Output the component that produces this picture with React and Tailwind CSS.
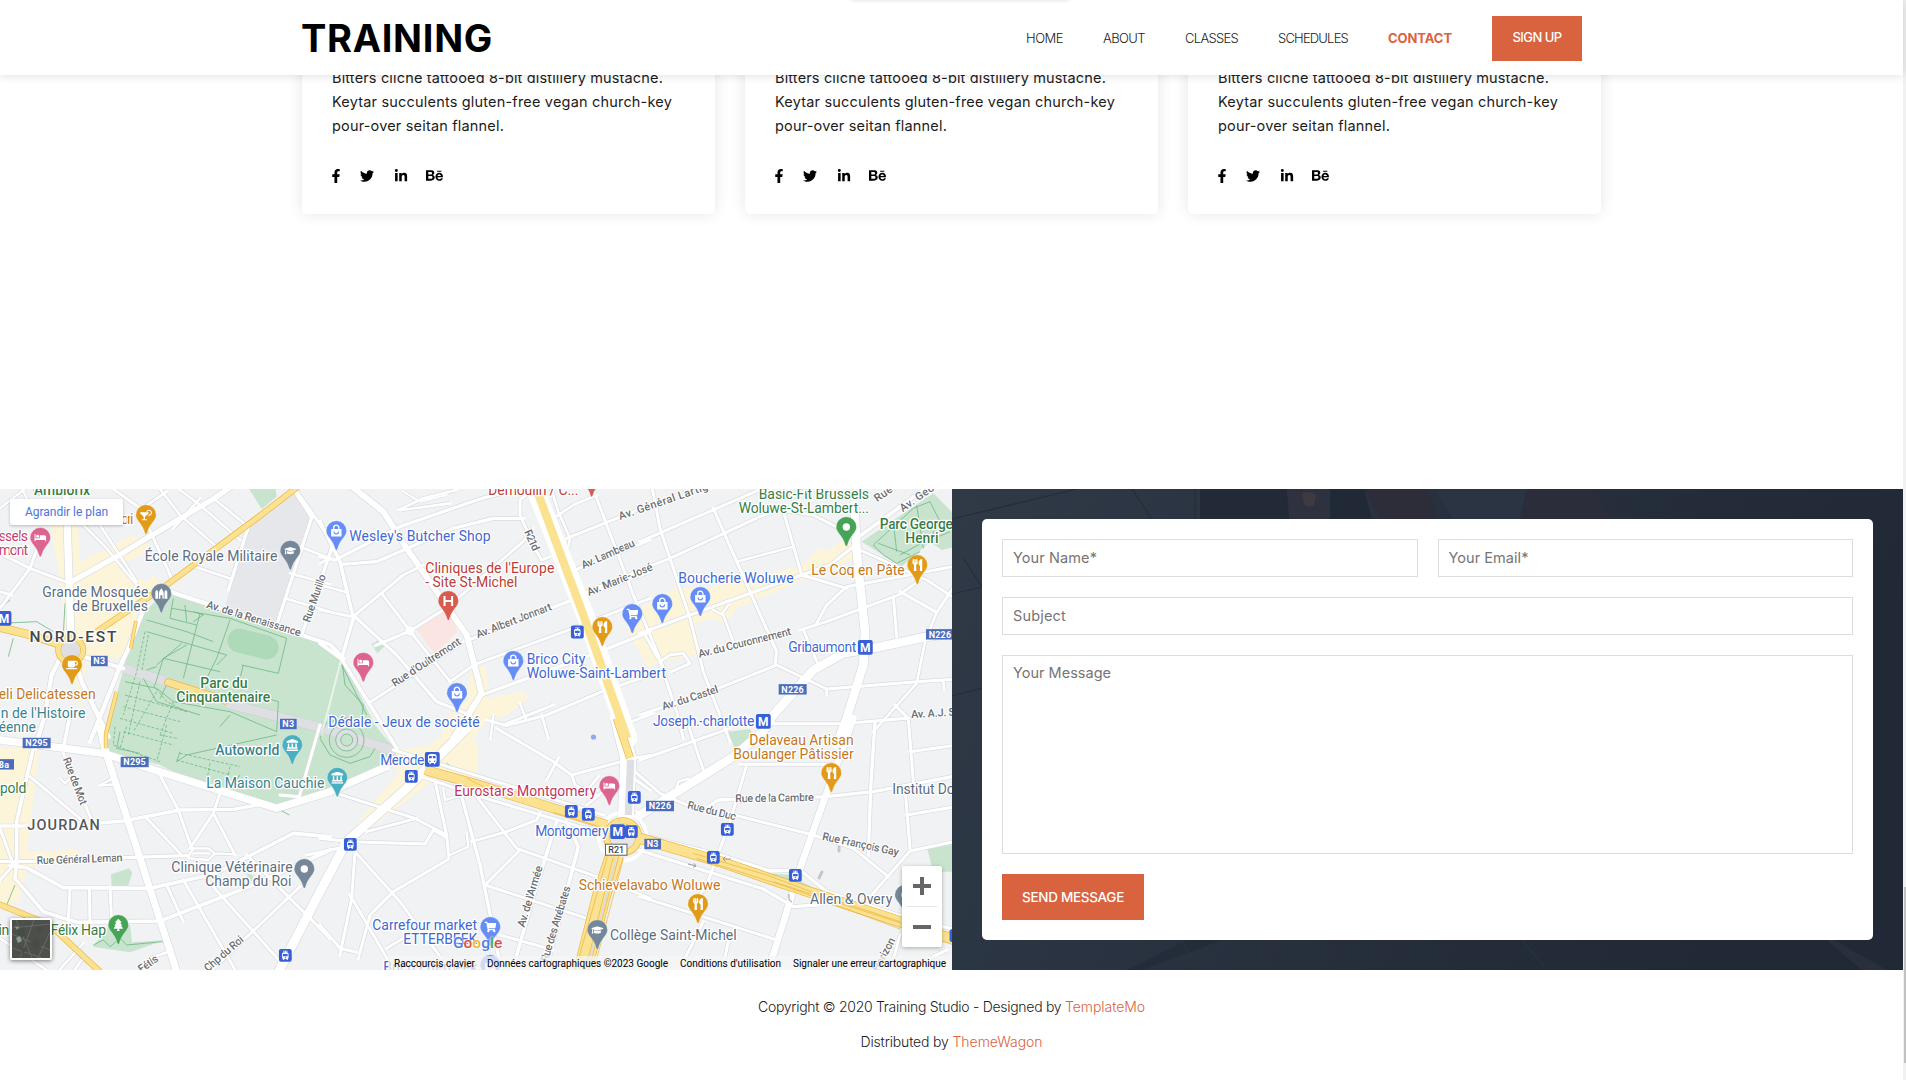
import React, { useLayoutEffect, useRef, useState } from "react";
import {
  FaFacebookF, FaTwitter, FaLinkedinIn, FaBehance, FaBed, FaGraduationCap, FaShoppingCart,
  FaUtensils, FaCoffee, FaCocktail, FaTree, FaLandmark, FaShoppingBag, FaMosque,
} from "react-icons/fa";
import { MdTram, MdTrain } from "react-icons/md";

/* Text set to an exact run width by spreading the difference over its letters. */
function Fit({ w, className = "", children }) {
  const ref = useRef(null);
  const [ls, setLs] = useState(0);
  useLayoutEffect(() => {
    const natural = ref.current.getBoundingClientRect().width;
    setLs((w - natural) / children.length);
  }, []);
  return (
    <span ref={ref} className={"inline-block whitespace-pre " + className} style={{ letterSpacing: ls + "px" }}>
      {children}
    </span>
  );
}

/* Map sheets: every sheet is drawn at three times its size from its own origin. */
const SHEETS = {
  A: [0, 485], B: [320, 485], C: [640, 485],
  D: [0, 725], E: [320, 725], F: [640, 725],
};
const at = (s, x, y) => [SHEETS[s][0] + x / 3, SHEETS[s][1] + y / 3];
const sheet = (s) => `translate(${SHEETS[s][0]} ${SHEETS[s][1]}) scale(0.33333)`;

const GREEN = "#c8e4ce";
const SAND = "#fdf5da";

const AREAS = [
  ["A", GREEN, "M92,0 L106,32 L265,32 L272,0Z"],
  ["A", GREEN, "M740,0 L825,0 L830,35 L785,72Z"],
  ["A", SAND, "M150,110 L235,110 L238,232 L400,150 L455,190 L350,250 L440,290 L460,270 L490,300 L400,362 L420,400 L385,520 L262,512 L240,690 L225,560 L185,530 L195,440 L182,300Z"],
  ["A", "#e6e7eb", "M750,125 L880,20 L935,100 L830,425 L672,372Z"],
  ["A", GREEN, "M495,320 L960,475 L1025,520 L1125,720 L1190,800 L1160,840 L960,932 L830,968 L630,915 L480,840 L322,800 L325,740 L360,590 L415,400Z"],
  ["B", "#fae5e2", "M290,432 L385,375 L412,440 L345,508 L328,485Z"],
  ["B", GREEN, "M155,478 L185,460 L195,482 L172,505Z"],
  ["B", SAND, "M360,770 L385,690 L440,650 L450,560 L492,540 L505,590 L500,640 L610,620 L625,640 L560,690 L500,705 L455,770Z"],
  ["B", SAND, "M920,430 L990,400 L990,560Z"],
  ["C", SAND, "M0,370 L110,310 L200,310 L490,240 L540,185 L560,200 L610,165 L670,190 L660,215 L600,240 L500,280 L290,370 L255,415 L220,400 L165,415 L185,505 L30,540 L0,440Z"],
  ["C", GREEN, "M665,170 L880,25 L945,90 L945,185 L905,195 L870,170 L785,245Z"],
  ["D", SAND, "M0,70 L120,60 L90,300 L80,380 L235,374 L235,402 L80,430 L55,530 L0,540Z"],
  ["D", GREEN, "M333,448 L388,430 L397,445 L384,482 L335,485Z"],
  ["D", GREEN, "M330,600 L390,600 L396,652 L495,645 L390,682 L278,665Z"],
  ["D", GREEN, "M738,445 L760,450 L756,470Z"],
  ["E", SAND, "M200,110 L240,75 L330,60 L380,20 L470,50 L475,150 L430,180 L360,150 L150,310 L90,320 L240,140Z"],
  ["F", GREEN, "M860,365 L945,350 L945,440 L880,440Z"],
  ["F", GREEN, "M390,445 L450,450 L525,492 L430,480Z"],
  ["F", GREEN, "M265,20 L330,12 L345,40 L285,75Z"],
  ["F", SAND, "M-20,320 L0,300 L15,340 L0,370Z"],
];

const ROADS = [
  ["A", 22, "M198,0 L207,290 L213,460"],
  ["A", 16, "M215,290 L350,215 L440,160 L640,42 L700,0"],
  ["A", 12, "M495,315 L990,478 L1030,520"],
  ["A", 13, "M432,370 L385,490 L360,545 L270,770"],
  ["A", 14, "M225,520 L245,590 L325,755"],
  ["A", 12, "M250,515 L370,550"],
  ["A", 13, "M180,520 L155,570 L135,690 L105,790"],
  ["A", 9, "M340,12 L420,70 L515,280"],
  ["A", 8, "M250,120 L320,190 L410,300"],
  ["A", 8, "M300,120 L410,290"],
  ["A", 8, "M480,12 L540,90 L655,190"],
  ["A", 8, "M540,15 L600,60 L720,165"],
  ["A", 8, "M640,40 L745,125"],
  ["A", 8, "M520,130 L600,40 M420,75 L500,20"],
  ["A", 9, "M0,205 L90,250 L210,295"],
  ["A", 9, "M0,370 L90,250 L130,140 M0,320 L35,330"],
  ["A", 7, "M60,0 L90,60 M0,70 L90,0"],
  ["A", 10, "M745,125 L685,315"],
  ["A", 8, "M585,245 L695,282"],
  ["A", 10, "M885,20 L935,98 L830,420"],
  ["A", 10, "M890,20 L990,160"],
  ["A", 8, "M885,180 L990,220 M870,265 L990,298 M855,340 L990,380"],
  ["A", 10, "M995,190 L905,450"],
  ["B", 18, "M90,0 L190,80 L260,190 L350,320 L440,450 L485,625 L400,760"],
  ["B", 11, "M0,110 L60,230 L100,400 L65,520"],
  ["B", 10, "M0,215 L45,225 L240,125 L480,42 L620,5"],
  ["B", 10, "M65,238 L170,230 L400,130 L520,100 L612,100"],
  ["B", 8, "M235,75 L310,40 L410,15 M245,75 L390,55"],
  ["B", 6, "M250,20 L300,50 L380,30"],
  ["B", 9, "M105,390 L250,270 L310,240"],
  ["B", 10, "M105,395 L230,510 L350,650 L450,690"],
  ["B", 9, "M185,325 L270,438 L390,590"],
  ["B", 9, "M165,482 L270,438 L385,365 L620,160 L640,130"],
  ["B", 8, "M0,375 L95,395 M0,300 L75,320 M0,235 L20,225"],
  ["B", 10, "M445,465 L730,355 L990,260"],
  ["B", 9, "M145,655 L430,470"],
  ["B", 9, "M390,590 L465,538 L760,430 L990,340"],
  ["B", 10, "M485,630 L840,500 L990,440"],
  ["B", 9, "M740,265 L990,165"],
  ["B", 9, "M750,340 L990,245"],
  ["B", 9, "M740,160 L890,100 L990,60"],
  ["B", 8, "M690,0 L715,80 L750,160 L745,185 L725,200"],
  ["B", 9, "M630,20 L600,45 L600,90 L650,200 L665,225 L690,215"],
  ["B", 9, "M815,0 L940,330 L990,450 L1035,560"],
  ["B", 8, "M700,100 L760,60 L830,30"],
  ["B", 9, "M500,705 L560,722 L680,690 L840,622 L990,570"],
  ["B", 8, "M600,655 L617,700 M665,690 L685,760 M520,690 L512,760"],
  ["B", 9, "M920,715 L1000,685"],
  ["B", 11, "M0,475 L65,522 L150,660 L230,790"],
  ["C", 9, "M35,0 L60,130 L150,400 L190,560 L270,770"],
  ["C", 9, "M220,70 L330,320 L410,500 L405,540"],
  ["C", 9, "M0,170 L230,70 L380,5"],
  ["C", 9, "M0,255 L90,220 L360,95 L420,75 L520,90 L645,155"],
  ["C", 9, "M425,60 L485,270 L620,310"],
  ["C", 8, "M290,230 L460,185"],
  ["C", 10, "M0,445 L150,390 L330,325 L570,240 L640,185"],
  ["C", 9, "M530,415 L560,360 L620,305 L700,290 L990,235"],
  ["C", 9, "M480,435 L560,410 L780,328 L840,285"],
  ["C", 9, "M490,435 L535,540"],
  ["C", 9, "M780,320 L890,382 L945,300"],
  ["C", 8, "M890,382 L855,470 L830,595 L700,740"],
  ["C", 11, "M650,160 L870,0"],
  ["C", 9, "M660,195 L760,240 L860,285 L960,350"],
  ["C", 9, "M0,690 L240,608 L410,540 L560,612 L830,590 L990,580"],
  ["C", 9, "M760,335 L770,455"],
  ["C", 8, "M560,612 L560,630 M910,590 L912,612"],
  ["C", 9, "M390,716 L610,716 L800,700 M765,660 L805,700"],
  ["C", 9, "M10,440 L60,530 L110,680 L130,760"],
  ["C", 9, "M60,530 L90,510 L130,505 L150,535 L95,560"],
  ["C", 8, "M220,375 L245,388 L265,360 M250,390 L280,470"],
  ["C", 26, "M643,60 L650,200 L675,440 L670,540 L620,700 L590,780"],
  ["C", 26, "M990,438 L860,455 L700,490 L610,505 L520,555 L400,690 L370,740 L280,815 L0,990"],
  ["D", 22, "M0,45 L310,85 L480,140 L830,250 L990,200 L1160,125"],
  ["D", 21, "M300,10 L320,90 L540,770"],
  ["D", 11, "M100,70 L50,290 L50,410 L45,460 L130,560 L230,592 L480,588 L760,480 L990,375"],
  ["D", 10, "M0,303 L80,303 M300,294 L370,288 L540,255 L700,253 L800,235"],
  ["D", 9, "M90,155 L245,285 M190,85 L275,285"],
  ["D", 10, "M0,410 L110,410 M370,398 L560,392"],
  ["D", 11, "M30,422 L80,428 L190,488 L450,490 L640,448 L880,325 L990,335"],
  ["D", 9, "M0,310 L40,420 L0,465"],
  ["D", 9, "M480,150 L535,255 L575,370"],
  ["D", 9, "M660,205 L640,265 L705,390 M640,265 L570,370 M440,280 L545,390"],
  ["D", 7, "M565,395 L580,370 L625,370 L645,385 L625,405 L570,400 M645,385 L705,388 M580,385 L625,385"],
  ["D", 9, "M210,490 L205,592 M268,490 L270,590 M330,485 L335,590"],
  ["D", 9, "M500,480 L550,590 M550,465 L720,760 M610,452 L850,720"],
  ["D", 9, "M740,390 L830,480 L990,640"],
  ["D", 9, "M900,485 L620,750"],
  ["D", 11, "M190,70 L208,-20"],
  ["D", 8, "M0,640 L140,735 M160,755 L250,655 M200,770 L255,690 M450,700 L505,680"],
  ["D", 7, "M180,160 L195,175 L210,160 M300,180 L330,165 M300,182 L340,178"],
  ["D", 9, "M895,225 L960,0 M840,210 L895,215"],
  ["E", 27, "M-150,790 L0,500 L80,350 L260,190 L440,10"],
  ["E", 9, "M530,10 L700,110 L755,150 L940,100 L1000,90"],
  ["E", 9, "M550,0 L700,-60"],
  ["E", 9, "M715,100 L680,165 M755,150 L765,180 L830,210"],
  ["E", 9, "M50,205 L285,280 L380,330 L387,402 L220,500 L150,570 L115,700"],
  ["E", 9, "M0,340 L90,350 L315,357 L340,315 L375,335 M90,362 L-40,390 M140,320 L290,280"],
  ["E", 9, "M345,165 L355,215 L380,330"],
  ["E", 10, "M425,215 L480,420 L545,740"],
  ["E", 9, "M470,215 L590,370 L830,455 L990,520"],
  ["E", 9, "M455,350 L560,320 L650,285 L660,265"],
  ["E", 9, "M600,375 L495,480 L800,580"],
  ["E", 11, "M710,290 L650,480 L570,760"],
  ["E", 11, "M740,290 L775,365 L740,500 L670,760"],
  ["E", 9, "M105,380 L240,530 L400,750 M105,380 L95,520 L60,690 M90,510 L230,750"],
  ["E", 9, "M0,600 L60,670 L110,682 M200,670 L250,640 M540,630 L700,675"],
  ["E", 7, "M370,190 L375,225 L430,210 M390,390 L445,365 L440,325"],
  ["E", 9, "M220,75 L400,130 L740,235 L850,270 M290,150 L480,215 L780,305 L860,320"],
  ["E", 48, "M895,-20 L925,100 L918,275"],
  ["E", 9, "M790,210 L835,155 M800,240 L880,175 L940,160 L990,195"],
  ["F", 9, "M145,0 L195,150"],
  ["F", 9, "M0,105 L270,10"],
  ["F", 9, "M-15,140 L60,205 L140,240"],
  ["F", 7, "M105,205 L115,170 L145,160 L160,180"],
  ["F", 9, "M300,118 L580,118 M320,120 L270,290 L200,480 L180,510"],
  ["F", 20, "M640,-20 L540,260 L480,430 L440,560 L390,720"],
  ["F", 10, "M205,245 L235,225 L560,215 L700,200 L990,145"],
  ["F", 9, "M290,272 L520,330 L640,370 L745,455"],
  ["F", 10, "M705,-10 L692,190 L685,390"],
  ["F", 9, "M805,-20 L820,170 M795,190 L810,370"],
  ["F", 9, "M810,80 L990,55 M800,270 L990,238 M690,515 L810,378 L990,340"],
  ["F", 10, "M-10,260 L25,335 L240,390 L390,438 L480,435 L560,500 L780,572 L990,625"],
  ["F", 10, "M-20,370 L370,492 L460,545 L530,540"],
  ["F", 9, "M0,515 L400,642 M190,590 L130,710 L330,725 M265,650 L250,720"],
  ["F", 9, "M780,630 L750,740"],
  ["F", 10, "M870,700 L920,675"],
];

const HIGHWAYS = [
  ["A", 15, "M900,0 L790,85 L500,300 L290,440"],
  ["A", 22, "M-10,425 L85,448 L180,478"],
  ["A", 20, "M505,592 L675,646"],
  ["A", 7, "M408,408 L392,490"],
  ["A", 9, "M350,620 L318,745 L318,790"],
  ["D", 15, "M-10,535 L150,600 L310,750"],
  ["E", 20, "M890,-20 L930,98"],
  ["E", 26, "M315,135 L470,178 L860,300"],
  ["E", 52, "M884,390 L845,510 L782,760"],
  ["F", 29, "M0,340 L240,410 L390,462 L520,505 L780,590 L990,660"],
];
const HIGHWAY_LINES = [
  ["E", "M862,395 L765,740 M880,395 L795,740 M896,395 L805,740 M910,400 L820,740"],
  ["F", "M160,385 L380,450 L540,510 L780,590 M170,400 L440,485 L780,612 M400,470 L800,600"],
  ["E", "M440,160 L500,190 M700,262 L860,312"],
];

const PARK_PATHS = [
  ["A", "M520,340 L510,400 L590,420 M515,370 L690,400 L860,460 M440,405 L560,440 L640,470 M600,385 L550,580 M690,405 L650,520 L620,580 M440,440 L680,510 L650,540 M860,460 L835,565 L725,540 M555,360 L560,410 M580,380 L610,390 L580,410 M545,475 L470,540 M560,480 L490,520 L465,600 M490,520 L660,560 M470,545 L440,555 M730,540 L715,600"],
  ["A", "M375,590 L470,610 L520,650 L690,680 L830,740 M430,580 L470,650 L600,690 M800,640 L835,650 L830,740 M690,690 L660,725 M500,600 L480,640"],
  ["A", "M0,415 L110,410 L160,440 M190,450 L195,355 M40,460 L25,515 M0,370 L30,345"],
  ["D", "M360,20 L350,70 L420,85 M540,80 L530,110 L560,90 L830,30 M690,190 L720,150 M840,255 L868,270 M640,180 L815,235 M20,540 L45,480 M280,660 L310,645 L330,665 L360,640 L380,660 L490,650"],
  ["B", "M65,520 L75,600 L130,660 L125,700 M65,540 L140,690"],
  ["C", "M700,180 L730,210 L770,235 L840,200 M700,180 L820,70 L870,50 L900,110 L870,160 L780,210 M715,175 L810,210 M760,110 L770,200 M830,60 L850,190 M860,170 L930,140"],
  ["E", "M380,115 L405,132"],
];
const PARK_DASHES = [
  ["A", "M435,440 L410,560 L370,690 M445,450 L425,560 M375,630 L560,680 M370,665 L540,710 M360,700 L520,745 M420,590 L385,750 M470,620 L400,740 M520,650 L480,750 M460,600 L500,650 L560,680"],
  ["D", "M345,5 L340,60 L480,110 M380,5 L360,70 M370,20 L520,60 M500,0 L470,110 M540,85 L720,125 M530,105 L690,150 M630,115 L620,170 M690,125 L680,175 M480,30 L530,40"],
];

const SLATE = "#76879a";
const BLUE = "#668cf5";
const ORANGE = "#e19b18";
const PINK = "#dd6490";
const TEAL = "#4bafc2";
const LEAF = "#47a355";
const PINS = [
  ["A", 438, 90, ORANGE, FaCocktail], ["A", 121, 158, PINK, FaBed], ["A", 871, 197, SLATE, FaGraduationCap],
  ["A", 484, 326, SLATE, FaMosque], ["A", 216, 540, ORANGE, FaCoffee], ["B", 49, 138, BLUE, FaShoppingBag],
  ["B", 385, 348, "#d85b4f", "H"], ["B", 130, 533, PINK, FaBed], ["B", 411, 624, BLUE, FaShoppingBag],
  ["B", 580, 528, BLUE, FaShoppingBag], ["B", 847, 426, ORANGE, FaUtensils], ["B", 937, 387, BLUE, FaShoppingCart],
  ["B", 815, -22, "#d85b4f", "dot"], ["C", 67, 357, BLUE, FaShoppingBag], ["C", 181, 336, BLUE, FaShoppingBag],
  ["C", 619, 126, LEAF, "dot"], ["C", 832, 240, ORANGE, FaUtensils], ["D", 877, 60, TEAL, FaLandmark],
  ["E", 52, 158, TEAL, FaLandmark], ["E", 868, 183, PINK, FaBed], ["E", 832, 615, SLATE, FaGraduationCap],
  ["E", 511, 606, BLUE, FaShoppingCart], ["E", 511, 720, BLUE, FaShoppingBag], ["F", 574, 144, ORANGE, FaUtensils],
  ["F", 174, 537, ORANGE, FaUtensils], ["D", 913, 432, SLATE, "dot"], ["D", 355, 600, LEAF, FaTree],
  ["F", 795, 510, SLATE, "dot"],
];

const TRAMS = [
  ["B", 772, 441], ["E", 274, 154], ["E", 91, 358], ["E", 754, 259], ["E", 805, 268], ["E", 943, 217],
  ["E", 934, 320], ["F", 262, 313], ["F", 220, 397], ["F", 466, 451], ["D", 856, 691], ["F", 948, 632],
];
const METROS = [["A", 12, 400], ["C", 676, 487], ["C", 370, 709], ["E", 893, 320]];
const SHIELDS = [
  ["A", 298, 528, 50, "N3"], ["A", 865, 717, 50, "N3"], ["D", 110, 54, 84, "N295"], ["D", 404, 111, 84, "N295"],
  ["D", 12, 118, 60, "8a"], ["C", 458, 613, 84, "N226"], ["C", 900, 448, 84, "N226"], ["F", 60, 243, 84, "N226"],
  ["F", 38, 357, 50, "N3"],
];

const T_SLATE = "#5d6d80";
const T_BLUE = "#4267d2";
const T_ORANGE = "#c47721";
const T_GREEN = "#377d44";
const T_RED = "#bb4036";
const T_TEAL = "#37848f";
/* sheet, x, baseline, width, text, colour */
const LABELS = [
  ["A", 102, 31, 168, "Ambiorix", T_GREEN, 500],
  ["A", 362, 117, 38, "ori", T_ORANGE],
  ["A", -4, 168, 88, "ssels", "#c2406d"],
  ["A", -4, 209, 88, "mont", "#c2406d"],
  ["A", 434, 228, 398, "École Royale Militaire", T_SLATE],
  ["A", 127, 337, 318, "Grande Mosquée", T_SLATE],
  ["A", 217, 378, 227, "de Bruxelles", T_SLATE],
  ["A", -4, 642, 291, "eli Delicatessen", T_ORANGE],
  ["A", 2, 698, 254, "n de l'Histoire", T_TEAL],
  ["A", -4, 740, 112, "éenne", T_TEAL],
  ["A", 601, 609, 142, "Parc du", T_GREEN, 500],
  ["A", 529, 650, 282, "Cinquantenaire", T_GREEN, 500],
  ["B", 88, 168, 424, "Wesley's Butcher Shop", T_BLUE],
  ["B", 505, 31, 270, "Demoulin / C...", T_RED],
  ["B", 316, 264, 387, "Cliniques de l'Europe", T_RED],
  ["B", 316, 305, 276, "- Site St-Michel", T_RED],
  ["B", 620, 537, 176, "Brico City", T_BLUE],
  ["B", 620, 579, 418, "Woluwe-Saint-Lambert", T_BLUE],
  ["B", 25, 725, 454, "Dédale - Jeux de société", T_BLUE],
  ["C", 356, 41, 331, "Basic-Fit Brussels", T_GREEN],
  ["C", 296, 84, 391, "Woluwe-St-Lambert...", T_GREEN],
  ["C", 115, 293, 346, "Boucherie Woluwe", T_BLUE],
  ["C", 514, 270, 280, "Le Coq en Pâte", T_ORANGE],
  ["C", 719, 132, 220, "Parc George", T_GREEN, 500],
  ["C", 796, 174, 100, "Henri", T_GREEN, 500],
  ["C", 445, 500, 204, "Gribaumont", T_BLUE],
  ["C", 39, 723, 304, "Joseph.-charlotte", T_BLUE],
  ["D", 646, 90, 192, "Autoworld", T_TEAL, 500],
  ["D", 619, 189, 354, "La Maison Cauchie", T_TEAL],
  ["D", 0, 204, 79, "pold", T_GREEN],
  ["D", 514, 440, 364, "Clinique Vétérinaire", T_SLATE],
  ["D", 616, 482, 258, "Champ du Roi", T_SLATE],
  ["D", -4, 629, 32, "in", T_GREEN],
  ["D", 152, 629, 166, "Félix Hap", T_GREEN],
  ["E", 181, 120, 132, "Merode", T_BLUE],
  ["E", 403, 213, 426, "Eurostars Montgomery", "#c2335f"],
  ["E", 646, 333, 220, "Montgomery", T_BLUE],
  ["E", 776, 495, 425, "Schievelavabo Woluwe", T_ORANGE],
  ["E", 157, 615, 314, "Carrefour market", T_BLUE],
  ["E", 250, 657, 222, "ETTERBEEK", T_BLUE],
  ["E", 870, 644, 380, "Collège Saint-Michel", T_SLATE],
  ["E", 190, 742, 282, "Brico Etterbeek", T_BLUE],
  ["F", 328, 59, 313, "Delaveau Artisan", T_ORANGE],
  ["F", 280, 102, 361, "Boulanger Pâtissier", T_ORANGE],
  ["F", 757, 207, 210, "Institut Don", T_SLATE],
  ["F", 510, 537, 247, "Allen & Overy", T_SLATE],
];
/* sheet, x, baseline, width, angle, text */
const STREETS = [
  ["A", 617, 368, 295, 17, "Av. de la Renaissance"],
  ["A", 929, 414, 150, -71, "Rue Murillo"],
  ["B", 612, 140, 66, 66, "R21d"],
  ["B", 900, 105, 320, -19, "Av. Général Lartigue"],
  ["B", 790, 252, 172, -24, "Av. Lambeau"],
  ["B", 806, 333, 210, -22, "Av. Marie-José"],
  ["B", 473, 460, 240, -21, "Av. Albert Jonnart"],
  ["B", 224, 606, 240, -33, "Rue d'Oultremont"],
  ["C", 712, 52, 100, -35, "Rue St"],
  ["C", 788, 82, 170, -35, "Av. George"],
  ["C", 178, 518, 285, -14, "Av. du Couronnement"],
  ["C", 70, 676, 175, -18, "Av. du Castel"],
  ["C", 814, 699, 140, -3, "Av. A.J. Sl"],
  ["D", 188, 102, 150, 69, "Rue de Mot"],
  ["D", 110, 418, 258, -2, "Rue Général Leman"],
  ["D", 424, 744, 65, -35, "Fétis"],
  ["D", 624, 742, 145, -41, "Chp du Roi"],
  ["E", 613, 608, 190, -73, "Av. de l'Armée"],
  ["E", 683, 712, 235, -73, "Rue des Atrébates"],
  ["F", 286, 232, 236, -1, "Rue de la Cambre"],
  ["F", 140, 250, 150, 14, "Rue du Duc"],
  ["F", 545, 344, 234, 12, "Rue François Gay"],
  ["F", 715, 742, 110, -62, "Horizon"],
];

function Pin({ s, x, y, color, icon: Icon }) {
  const [cx, cy] = at(s, x, y);
  return (
    <g transform={`translate(${cx} ${cy})`}>
      <path d="M0,-10.2 A10.2,10.2 0 0 1 10.2,0 C10.2,5.6 3.4,8.6 1.1,18.2 Q0,20.4 -1.1,18.2 C-3.4,8.6 -10.2,5.6 -10.2,0 A10.2,10.2 0 0 1 0,-10.2Z" fill={color} stroke="#fff" strokeOpacity=".55" strokeWidth=".6" />
      {Icon === "dot" && <circle r="3.7" fill="#fff" />}
      {Icon === "H" && <path d="M-3.8,-5 V5 M3.8,-5 V5 M-3.8,0 H3.8" stroke="#fff" strokeWidth="2" fill="none" />}
      {Icon === FaShoppingBag && (
        <g>
          <path d="M-5.2,-2 H5.2 V5 Q5.2,5.6 4.6,5.6 H-4.6 Q-5.2,5.6 -5.2,5Z" fill="#fff" />
          <path d="M-2.6,-1.5 V-3.2 A2.6,2.6 0 0 1 2.6,-3.2 V-1.5" fill="none" stroke="#fff" strokeWidth="1.3" />
          <path d="M-2.3,.6 A2.3,2.3 0 0 0 2.3,.6" fill="none" stroke={color} strokeWidth="1.1" />
        </g>
      )}
      {Icon === FaMosque && (
        <path d="M-6,5 V-2 L-4.6,-4 L-3.2,-2 V5Z M3.2,5 V-2 L4.6,-4 L6,-2 V5Z M-2.4,5 V-.5 Q-2.4,-2.5 0,-5.4 Q2.4,-2.5 2.4,-.5 V5 H1 V1.5 H-1 V5Z" fill="#fff" />
      )}
      {typeof Icon !== "string" && Icon !== FaShoppingBag && Icon !== FaMosque && <Icon x="-6" y="-6" size={12} color="#fff" />}
    </g>
  );
}

function CityMap() {
  return (
    <svg viewBox="0 489 952 481" className="block h-[481px] w-[952px]" fontFamily='Roboto, "Liberation Sans", sans-serif'>
      <rect x="0" y="489" width="952" height="481" fill="#f0f2f4" />
      {AREAS.map(([s, c, d], i) => <path key={i} transform={sheet(s)} d={d} fill={c} />)}
      <g transform={sheet("A")}>
        <rect x="-78" y="-36" width="156" height="72" rx="36" fill="#afdab9" transform="translate(759 477) rotate(14)" />
        <path d="M370,550 L500,590 M680,655 L950,725 L1190,800" stroke="#cfd1d4" strokeWidth="31" fill="none" />
        <path d="M370,550 L500,590 M680,655 L950,725 L1190,800" stroke="#dedfe2" strokeWidth="27" fill="none" />
      </g>
      <g fill="none" stroke="#6fb682" strokeWidth="2.4">
        {PARK_PATHS.map(([s, d], i) => <path key={i} transform={sheet(s)} d={d} />)}
        <g strokeDasharray="9 5">{PARK_DASHES.map(([s, d], i) => <path key={i} transform={sheet(s)} d={d} />)}</g>
        <g transform={sheet("E")}>
          <circle cx="80" cy="45" r="33" fill="#dedfe2" />
          <circle cx="80" cy="45" r="18" fill={GREEN} />
          <circle cx="80" cy="45" r="52" />
          <path d="M20,-10 L0,40 L30,90 L90,115 L150,95 L165,70 M30,-10 L90,-22 L150,5" />
        </g>
      </g>
      <g fill="none" stroke="#d9dbe0" strokeLinejoin="round">
        {ROADS.map(([s, w, d], i) => <path key={i} transform={sheet(s)} d={d} strokeWidth={w + 4} />)}
        <circle cx="410" cy="631" r="3.5" strokeWidth="3.4" />
      </g>
      <g fill="none" stroke="#fff" strokeLinejoin="round" strokeLinecap="round">
        {ROADS.map(([s, w, d], i) => <path key={i} transform={sheet(s)} d={d} strokeWidth={w} />)}
        <path transform={sheet("B")} d="M640,0 L700,150 L800,400 L925,760" strokeWidth="54" />
        <path transform={sheet("B")} d="M5,750 L62,530" strokeWidth="6" strokeOpacity=".6" />
        <circle cx="410" cy="631" r="3.5" strokeWidth="2.4" />
        <circle cx="622.7" cy="836.7" r="24" strokeWidth="3.5" />
      </g>
      <path transform={sheet("E")} d="M932,104 L925,270" stroke="#dedfe2" strokeWidth="22" />
      <g fill="none" stroke="#efb43c">
        {HIGHWAYS.map(([s, w, d], i) => <path key={i} transform={sheet(s)} d={d} strokeWidth={w + 4} strokeLinecap={i === 2 ? "round" : "butt"} />)}
        <circle cx="70.7" cy="650" r="12.5" strokeWidth="6" />
        <circle cx="622.7" cy="836.7" r="16" strokeWidth="7" />
      </g>
      <g fill="none" stroke="#fae290">
        {HIGHWAYS.map(([s, w, d], i) => <path key={i} transform={sheet(s)} d={d} strokeWidth={w} strokeLinecap={i === 2 ? "round" : "butt"} />)}
        <path transform={sheet("B")} d="M645,0 L700,150 L790,390 L922,760" strokeWidth="25" />
        <circle cx="70.7" cy="650" r="12.5" strokeWidth="4.6" />
        <circle cx="622.7" cy="836.7" r="16" strokeWidth="5.4" />
      </g>
      <circle cx="70.7" cy="650" r="9.5" fill="#dedfe2" />
      <circle cx="622.7" cy="836.7" r="12.5" fill="#e6e6e6" />
      <g fill="none" stroke="#ebb545" strokeWidth="2.2">
        {HIGHWAY_LINES.map(([s, d], i) => <path key={i} transform={sheet(s)} d={d} />)}
      </g>
      <path transform={sheet("E")} d="M888,400 L800,740" stroke="#dcdcd8" strokeWidth="6" />
      <g fill="none" stroke="#9a9da2" strokeWidth="1">
        <path d="M723,859 h8 m-8,0 l2.5,-2.5 m-2.5,2.5 l2.5,2.5 M688,864 l8,2 m0,0 l-2,-2.7 m2,2.7 l-3,1.5 M789,894 v6 l3,2" />
        <path d="M819,878 l3,-6 M839,847 v4" stroke="#c5c7cb" strokeWidth="3" strokeLinecap="round" />
      </g>
      <circle cx="593.5" cy="737" r="2.6" fill="#93a9ee" />
      {SHIELDS.map(([s, x, y, w, t], i) => {
        const [cx, cy] = at(s, x, y);
        return (
          <g key={i}>
            <rect x={cx - w / 6} y={cy - 5.2} width={w / 3} height="10.4" fill="#4a6dbd" />
            <text x={cx} y={cy + 3.3} textAnchor="middle" fontSize="9" fontWeight="700" fill="#fff" letterSpacing=".2">{t}</text>
          </g>
        );
      })}
      <rect x="605.5" y="844.2" width="21.5" height="11" fill="#fff" stroke="#666" strokeWidth="1" />
      <text x="616.3" y="853" textAnchor="middle" fontSize="9" fontWeight="500" fill="#444">R21</text>
      <g fontSize="11" fontWeight="500" fill="#6b6e73" stroke="#fff" strokeWidth="2.2" strokeLinejoin="round" paintOrder="stroke">
        {STREETS.map(([s, x, y, w, a, t], i) => {
          const [px, py] = at(s, x, y);
          return <text key={i} transform={`translate(${px} ${py}) rotate(${a})`} textLength={w / 3}>{t}</text>;
        })}
      </g>
      <g fontSize="14" stroke="#fff" strokeWidth="2.6" strokeLinejoin="round" paintOrder="stroke">
        {LABELS.map(([s, x, y, w, t, c, fw], i) => {
          const [px, py] = at(s, x, y);
          return <text key={i} x={px} y={py} textLength={w / 3} fill={c} fontWeight={fw || 400}>{t}</text>;
        })}
        <text x="29.5" y="642.3" textLength="87" fontSize="15.5" fontWeight="500" fill="#45484c">NORD-EST</text>
        <text x="27.3" y="830" textLength="72.5" fontSize="14.5" fontWeight="500" fill="#54575b">JOURDAN</text>
      </g>
      {TRAMS.map(([s, x, y], i) => {
        const [cx, cy] = at(s, x, y);
        return (
          <g key={i} transform={`translate(${cx} ${cy})`}>
            <rect x="-6.4" y="-6.4" width="12.8" height="12.8" rx="2" fill="#365fd8" />
            <MdTram x="-5.5" y="-5.5" size={11} color="#fff" />
          </g>
        );
      })}
      {METROS.map(([s, x, y], i) => {
        const [cx, cy] = at(s, x, y);
        return (
          <g key={i} transform={`translate(${cx} ${cy})`}>
            <rect x="-7.4" y="-7.4" width="14.8" height="14.8" rx="2" fill="#365fd8" />
            <text y="4.4" textAnchor="middle" fontSize="12" fontWeight="700" fill="#fff">M</text>
          </g>
        );
      })}
      <g transform="translate(432.3 759.3)">
        <rect x="-7.4" y="-7.4" width="14.8" height="14.8" rx="2" fill="#365fd8" />
        <MdTrain x="-6.5" y="-6.5" size={13} color="#fff" />
      </g>
      {PINS.map(([s, x, y, c, icon], i) => <Pin key={i} s={s} x={x} y={y} color={c} icon={icon} />)}
    </svg>
  );
}

function MapPanel() {
  return (
    <div className="relative h-[481px] w-[952px] overflow-hidden font-[Roboto,sans-serif]">
      <CityMap />
      <div className="absolute left-[10px] top-[10px] flex h-[26px] w-[113px] items-center justify-center rounded-[2px] bg-white pb-px text-[12px] text-[#4b74dc] shadow-[0_1px_3px_rgba(0,0,0,0.25)]">
        <Fit w={83}>Agrandir le plan</Fit>
      </div>
      <div className="absolute left-[10px] top-[429px] h-[42px] w-[42px] rounded-[2px] border-2 border-white bg-[#4c504b] shadow-[0_1px_4px_rgba(0,0,0,0.5)]">
        <svg viewBox="0 0 38 38" className="block h-full w-full">
          <path d="M0,0H38V38H0Z" fill="#4d504a" />
          <path d="M0,8L38,4M0,14L38,30M8,38L22,0M0,28L30,38M26,38L38,12M4,0L20,38" stroke="#74746c" strokeWidth=".7" />
          <path d="M5,10l7,-3 2,7 -6,5zM18,22l8,-3 3,7 -7,4zM24,6l6,2 -2,6zM7,26l7,3 -3,5z" fill="#464d46" />
          <path d="M4,18l4,-2 2,5 -4,2zM3,6l4,1 -2,3z" fill="#8b9a94" />
        </svg>
      </div>
      <div className="absolute left-[453px] top-[444px] text-[15.5px] leading-[20px] font-medium [text-shadow:0_0_2px_#fff,0_0_2px_#fff]">
        <span className="text-[#4a80e8]">G</span><span className="text-[#dc5044]">o</span><span className="text-[#ecb92e]">o</span><span className="text-[#4a80e8]">g</span><span className="text-[#44a35b]">l</span><span className="text-[#dc5044]">e</span>
      </div>
      <div className="absolute bottom-0 left-[388px] flex h-[14px] w-[564px] items-center justify-between bg-[#f5f5f5]/75 pl-[6px] pr-[6px] text-[10px] text-black">
        <Fit w={81}>Raccourcis clavier</Fit>
        <Fit w={181}>Données cartographiques ©2023 Google</Fit>
        <Fit w={101}>Conditions d'utilisation</Fit>
        <Fit w={153}>Signaler une erreur cartographique</Fit>
      </div>
      <div className="absolute left-[902px] top-[377px] flex h-[81px] w-[40px] flex-col items-center rounded-[2px] bg-white shadow-[0_1px_4px_rgba(0,0,0,0.3)]">
        <svg viewBox="0 0 18 18" className="mt-[11px] h-[18px] w-[18px]"><path d="M9,0V18M0,9H18" stroke="#666" strokeWidth="4" /></svg>
        <div className="mt-[11px] h-px w-[30px] bg-[#e6e6e6]" />
        <svg viewBox="0 0 18 18" className="mt-[11px] h-[18px] w-[18px]"><path d="M0,9H18" stroke="#666" strokeWidth="4" /></svg>
      </div>
    </div>
  );
}

function Backdrop() {
  return (
    <svg viewBox="0 0 951 481" className="absolute inset-0 h-full w-full">
      <defs>
        <linearGradient id="night" x1="0" y1="0" x2="1" y2=".25">
          <stop offset="0" stopColor="#303a47" />
          <stop offset=".35" stopColor="#2a3341" />
          <stop offset=".75" stopColor="#242c39" />
          <stop offset="1" stopColor="#222936" />
        </linearGradient>
      </defs>
      <rect width="951" height="481" fill="url(#night)" />
      <path d="M248,0 H335 L337,30 H248Z" fill="#232a37" />
      <path d="M335,0 H372 L378,30 H338Z" fill="#2f323e" />
      <path d="M350,4 q8,-3 14,2 l-2,10 q-6,4 -10,-1z" fill="#3d3a40" />
      <path d="M378,0 H412 L420,30 H378Z" fill="#222936" />
      <path d="M412,0 H475 L485,30 H428Z" fill="#2c2d39" />
      <path d="M575,0 H640 L660,30 H570Z" fill="#2b2e3a" />
      <path d="M484,0 H575 L568,30 H500Z" fill="#2a3442" />
      <path d="M243,0 V30 M0,30 L125,0 M180,0 L200,30 M0,105 L30,98 M0,207 L30,199 M12,70 L30,98" stroke="#252d39" strokeWidth="1.2" fill="none" />
      <path d="M235,451 L270,451 L190,481 L175,481Z" fill="#232c39" />
      <path d="M230,451 L245,481 M570,451 L595,481" stroke="#2b3542" fill="none" />
      <path d="M875,451 H882 L935,481 H910Z" fill="#292f3b" />
      <path d="M0,340 L30,330 V481 H0Z" fill="#2a3744" opacity=".5" />
    </svg>
  );
}

const field = "flex h-[38px] items-center border border-[#ddd] pl-[10px] pb-px text-[14.5px] text-[#757575]";

function ContactForm() {
  return (
    <div className="relative h-[481px] w-[951px] px-[30px] pt-[30px]">
      <Backdrop />
      <div className="relative flex h-[421px] w-[891px] flex-col rounded-[5px] bg-white p-5">
        <div className="grid grid-cols-2 gap-5">
          <div className={field}><Fit w={84}>Your Name*</Fit></div>
          <div className={field}><Fit w={80}>Your Email*</Fit></div>
        </div>
        <div className={field + " mt-5"}><Fit w={53}>Subject</Fit></div>
        <div className="mt-5 h-[200px] border border-[#ddd] pl-[10px] pt-[7px] text-[14.5px] leading-[20px] text-[#757575]">
          <Fit w={98}>Your Message</Fit>
        </div>
        <div className="mt-5 flex h-[46px] w-[142px] items-center justify-center bg-[#d9623f] text-[13.5px] font-medium text-white">
          <Fit w={102}>SEND MESSAGE</Fit>
        </div>
      </div>
    </div>
  );
}

function TrainerCard() {
  return (
    <div className="h-full w-[413px] rounded-[5px] bg-white pl-[30px] pt-[66px] text-[14.5px] leading-[24px] shadow-[0_0_15px_rgba(0,0,0,0.1)]">
      <div className="flex flex-col items-start text-[#1c1c1c]">
        <Fit w={331}>Bitters cliche tattooed 8-bit distillery mustache.</Fit>
        <Fit w={340}>Keytar succulents gluten-free vegan church-key</Fit>
        <Fit w={172}>pour-over seitan flannel.</Fit>
      </div>
      <div className="mt-[29px] flex items-center text-black">
        <FaFacebookF size={14} className="-ml-[3px]" />
        <FaTwitter size={14} className="ml-[17px]" />
        <FaLinkedinIn size={14} className="ml-[20px]" />
        <FaBehance size={17} className="ml-[18px]" />
      </div>
    </div>
  );
}

function Header() {
  return (
    <header className="relative z-10 flex h-[75px] w-full items-center bg-white pl-[302px] shadow-[0_0_10px_rgba(0,0,0,0.15)]">
      <div className="w-[724px] pt-px text-[38px] leading-none font-bold text-black">
        <Fit w={192} className="-ml-px">TRAINING</Fit>
      </div>
      <nav className="flex items-center gap-10 pt-[2px] text-[13px] font-light text-[#1a1a1a]">
        <Fit w={37}>HOME</Fit>
        <Fit w={42}>ABOUT</Fit>
        <Fit w={53}>CLASSES</Fit>
        <Fit w={70}>SCHEDULES</Fit>
        <Fit w={64} className="font-bold text-[#d9623f]">CONTACT</Fit>
      </nav>
      <div className="ml-10 mt-[2px] flex h-[45px] w-[90px] items-center justify-center bg-[#d9623f] pb-px text-[13px] font-medium text-white">
        <Fit w={49}>SIGN UP</Fit>
      </div>
      <div className="absolute -top-[10px] left-[850px] h-[10px] w-[220px] rounded bg-white shadow-[0_0_4px_rgba(0,0,0,0.15)]" />
    </header>
  );
}

export default function App() {
  return (
    <div className="flex h-[1080px] w-[1906px] overflow-hidden bg-white font-[Inter,sans-serif]">
      <div className="flex w-[1903px] flex-col">
        <Header />
        <section className="-mt-[75px] flex h-[489px] gap-[30px] px-[302px] pb-[275px]">
          <TrainerCard />
          <TrainerCard />
          <TrainerCard />
        </section>
        <section className="flex h-[481px]">
          <MapPanel />
          <ContactForm />
        </section>
        <footer className="flex flex-col items-center gap-[15px] pt-[27px] text-[14px] leading-[20px] font-light text-[#1c1c1c]">
          <div><Fit w={307}>{"Copyright © 2020 Training Studio - Designed by "}</Fit><Fit w={80} className="text-[#d9623f]">TemplateMo</Fit></div>
          <div><Fit w={92}>{"Distributed by "}</Fit><Fit w={90} className="text-[#d9623f]">ThemeWagon</Fit></div>
        </footer>
      </div>
      <div className="h-full w-[3px] bg-[#f1f1f1] pt-[887px]">
        <div className="ml-px h-[176px] w-[2px] bg-[#c1c1c1]" />
      </div>
    </div>
  );
}
